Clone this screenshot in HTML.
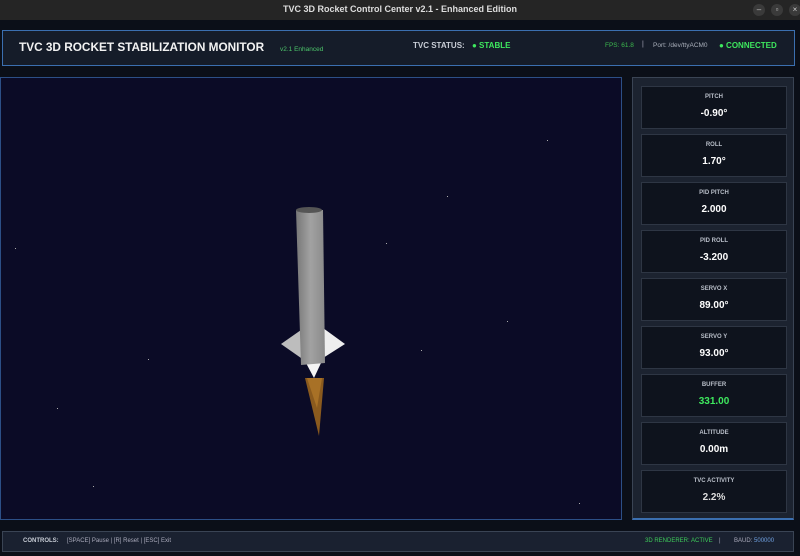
<!DOCTYPE html>
<html><head><style>
*{margin:0;padding:0;box-sizing:border-box}
body{width:800px;height:556px;background:#0b0f18;font-family:"Liberation Sans",sans-serif;position:relative;overflow:hidden;color:#fff}
.tb{position:absolute;left:0;top:0;width:800px;height:20px;background:#252525;color:#ddd;font-size:9px;font-weight:bold;text-align:center;line-height:19px}
.wb{position:absolute;top:4px;width:12px;height:12px;border-radius:6px;background:#3a3a3a;color:#ccc;font-size:8px;line-height:12px;text-align:center}
.hdr{position:absolute;left:2px;top:30px;width:793px;height:36px;background:#151c29;border:1px solid #3b6fb0}
.vp{position:absolute;left:0;top:77px;width:622px;height:443px;background:#0b0b26;border:1px solid #2c4f86}
.rp{position:absolute;left:632px;top:77px;width:162px;height:443px;background:#1c2330;border:1px solid #3a4454;border-bottom:2px solid #3b6fb0}
.card{position:absolute;left:8px;width:146px;height:43px;background:#0e131d;border:1px solid #2e3644;text-align:center}
.card .l{font-size:6px;font-weight:bold;color:#b8bec8;margin-top:7px}
.card .v{font-size:10px;font-weight:bold;color:#fff;margin-top:8px}
.ft{position:absolute;left:2px;top:531px;width:792px;height:21px;background:#1a2130;border:1px solid #3a4454;font-size:6px;line-height:19px;color:#aab}
.s{position:absolute;width:1px;height:1px;background:#aaa}
</style></head><body>
<div class="tb">TVC 3D Rocket Control Center v2.1 - Enhanced Edition</div>
<div class="wb" style="left:753px">–</div><div class="wb" style="left:771px">▫</div><div class="wb" style="left:789px">×</div>
<div class="hdr">
<span style="position:absolute;left:16px;top:9px;font-size:11.8px;font-weight:bold;color:#f2f2f2">TVC 3D ROCKET STABILIZATION MONITOR</span>
<span style="position:absolute;left:277px;top:15px;font-size:6.5px;color:#4cc46a">v2.1 Enhanced</span>
<span style="position:absolute;left:410px;top:10px;font-size:8px;font-weight:bold;color:#c8cdd6">TVC STATUS:</span>
<span style="position:absolute;left:469px;top:10px;font-size:8px;font-weight:bold;color:#3ee85e">● STABLE</span>
<span style="position:absolute;left:602px;top:11px;font-size:6.5px;color:#3cbb4e">FPS: 61.8</span>
<span style="position:absolute;left:639px;top:10px;font-size:7px;color:#aab">|</span>
<span style="position:absolute;left:650px;top:11px;font-size:6.5px;color:#aab0bb">Port: /dev/ttyACM0</span>
<span style="position:absolute;left:716px;top:10px;font-size:8px;font-weight:bold;color:#3ee85e">● CONNECTED</span>
</div>
<div class="vp">
<div class="s" style="left:546px;top:62px"></div><div class="s" style="left:446px;top:118px"></div><div class="s" style="left:385px;top:165px"></div><div class="s" style="left:14px;top:170px"></div><div class="s" style="left:506px;top:243px"></div><div class="s" style="left:420px;top:272px"></div><div class="s" style="left:56px;top:330px"></div><div class="s" style="left:92px;top:408px"></div><div class="s" style="left:578px;top:425px"></div><div class="s" style="left:147px;top:281px"></div>
<svg width="622" height="443" style="position:absolute;left:0;top:0">
<polygon points="304,300 323,300 318,358" fill="#8a5a1e"/>
<polygon points="306,300 321,300 316,330" fill="#b57a2a" opacity=".7"/>
<polygon points="280,266 300,252 300,280" fill="#bdbdbd"/>
<polygon points="322,250 344,266 322,280" fill="#eee"/>
<polygon points="305,285 320,285 313,300" fill="#f4f4f4"/>
<defs><linearGradient id="g" x1="0" x2="1"><stop offset="0" stop-color="#777"/><stop offset=".5" stop-color="#a2a2a2"/><stop offset="1" stop-color="#8a8a8a"/></linearGradient></defs>
<polygon points="295,132 322,132 324,285 300,287" fill="url(#g)"/>
<ellipse cx="308" cy="132" rx="13" ry="3" fill="#555"/>
</svg>
</div>
<div class="rp">
<div class="card" style="top:8px"><div class="l">PITCH</div><div class="v">-0.90°</div></div>
<div class="card" style="top:56px"><div class="l">ROLL</div><div class="v">1.70°</div></div>
<div class="card" style="top:104px"><div class="l">PID PITCH</div><div class="v">2.000</div></div>
<div class="card" style="top:152px"><div class="l">PID ROLL</div><div class="v">-3.200</div></div>
<div class="card" style="top:200px"><div class="l">SERVO X</div><div class="v">89.00°</div></div>
<div class="card" style="top:248px"><div class="l">SERVO Y</div><div class="v">93.00°</div></div>
<div class="card" style="top:296px"><div class="l">BUFFER</div><div class="v" style="color:#3ee85e">331.00</div></div>
<div class="card" style="top:344px"><div class="l">ALTITUDE</div><div class="v">0.00m</div></div>
<div class="card" style="top:392px"><div class="l">TVC ACTIVITY</div><div class="v" style="color:#ddd">2.2%</div></div>
</div>
<div class="ft">
<span style="position:absolute;left:20px;font-weight:bold;color:#c8cdd6">CONTROLS:</span>
<span style="position:absolute;left:64px">[SPACE] Pause | [R] Reset | [ESC] Exit</span>
<span style="position:absolute;left:642px;color:#3ecc5a">3D RENDERER: ACTIVE</span>
<span style="position:absolute;left:716px">|</span>
<span style="position:absolute;left:731px">BAUD: <span style="color:#6fa0e0">500000</span></span>
</div>
</body></html>
